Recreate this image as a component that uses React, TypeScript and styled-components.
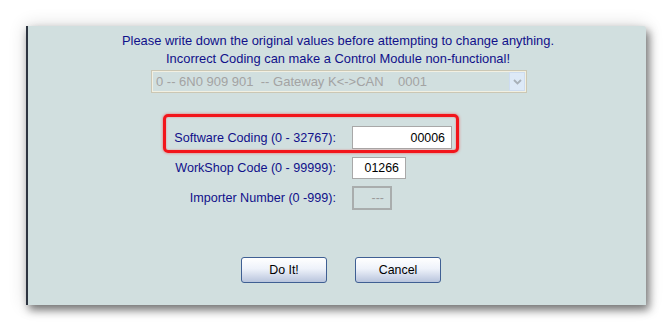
import React from 'react';
import styled, { createGlobalStyle } from 'styled-components';

const GlobalStyle = createGlobalStyle`
  body {
    margin: 0;
    background: #ffffff;
    font-family: 'Liberation Sans', Arial, sans-serif;
  }
`;

const Page = styled.div`
  padding: 26px 0 0 26px;
  height: 331px;
  box-sizing: border-box;
`;

const Panel = styled.div`
  width: 620px;
  height: 279px;
  box-sizing: border-box;
  background: #d1dfdf;
  border-left: 2px solid #2d3440;
  border-top-right-radius: 3px;
  box-shadow: 3px 5px 8px rgba(0, 0, 0, 0.5), 0 0 18px rgba(0, 0, 0, 0.16);
  padding-top: 6px;
  display: flex;
  flex-direction: column;
`;

const Notice = styled.p`
  margin: 0;
  padding-left: 2px;
  text-align: center;
  font-size: 12.9px;
  line-height: 18px;
  color: #10108a;
`;

const Select = styled.div`
  margin: 2px 0 0 123px;
  width: 376px;
  height: 23px;
  box-sizing: border-box;
  border: 1px solid #cbc7b4;
  box-shadow: inset 0 0 0 1px #f2f0e2;
  display: flex;
  align-items: center;
  justify-content: space-between;
  padding: 0 1px 0 4px;
`;

const SelectText = styled.span`
  font-size: 13px;
  color: #a3a3a3;
  white-space: pre;
`;

const DropButton = styled.span`
  width: 16px;
  height: 19px;
  background: #dde9f7;
  border: 1px solid #cddcf0;
  box-sizing: border-box;
  display: flex;
  align-items: center;
  justify-content: center;
`;

const Form = styled.div`
  margin: 33px 0 0 138px;
  display: flex;
  flex-direction: column;
`;

const Row = styled.div<{ $gap?: number }>`
  display: flex;
  align-items: center;
  gap: 16px;
  margin-top: ${(p) => p.$gap ?? 0}px;
`;

const Highlight = styled(Row)`
  position: relative;
  &::before {
    content: '';
    position: absolute;
    left: -3px;
    top: -12px;
    width: 296px;
    height: 39px;
    box-sizing: border-box;
    border: 3px solid #f2151b;
    border-radius: 5px;
    box-shadow: 0 0 3px rgba(255, 0, 0, 0.55), inset 0 0 2px rgba(255, 0, 0, 0.4);
    pointer-events: none;
  }
`;

const Label = styled.span`
  width: 170px;
  text-align: right;
  font-size: 12.6px;
  color: #10108a;
  white-space: nowrap;
`;

const Field = styled.div<{ $w: number; $h: number; $disabled?: boolean }>`
  width: ${(p) => p.$w}px;
  height: ${(p) => p.$h}px;
  box-sizing: border-box;
  background: ${(p) => (p.$disabled ? 'transparent' : '#ffffff')};
  border: ${(p) => (p.$disabled ? '2px solid #a9adad' : '1px solid #a8a8a8')};
  font-size: 12.4px;
  color: ${(p) => (p.$disabled ? '#9a9a9a' : '#000000')};
  display: flex;
  align-items: center;
  justify-content: flex-end;
  padding-right: 6px;
`;

const Buttons = styled.div`
  margin: 47px 0 0 213px;
  display: flex;
  gap: 28px;
`;

const Button = styled.button`
  width: 86px;
  height: 26px;
  border: 1px solid #3f5f93;
  border-radius: 3px;
  background: linear-gradient(#ffffff 0%, #eef2fa 45%, #b9c5dd 100%);
  font-family: 'Liberation Sans', Arial, sans-serif;
  font-size: 12.4px;
  color: #000000;
  padding: 0;
`;

export default function App() {
  return (
    <>
      <GlobalStyle />
      <Page>
        <Panel>
          <Notice>
            Please write down the original values before attempting to change anything.
            <br />
            Incorrect Coding can make a Control Module non-functional!
          </Notice>
          <Select>
            <SelectText>0 -- 6N0 909 901  -- Gateway K&lt;-&gt;CAN    0001</SelectText>
            <DropButton>
              <svg width="9" height="6" viewBox="0 0 9 6">
                <path d="M1 1 L4.5 4.5 L8 1" fill="none" stroke="#a8b0b8" strokeWidth="1.8" />
              </svg>
            </DropButton>
          </Select>
          <Form>
            <Highlight>
              <Label>Software Coding (0 - 32767):</Label>
              <Field $w={100} $h={23}>00006</Field>
            </Highlight>
            <Row $gap={8}>
              <Label>WorkShop Code (0 - 99999):</Label>
              <Field $w={54} $h={22}>01266</Field>
            </Row>
            <Row $gap={7}>
              <Label>Importer Number (0 -999):</Label>
              <Field $w={40} $h={24} $disabled>---</Field>
            </Row>
          </Form>
          <Buttons>
            <Button>Do It!</Button>
            <Button>Cancel</Button>
          </Buttons>
        </Panel>
      </Page>
    </>
  );
}
